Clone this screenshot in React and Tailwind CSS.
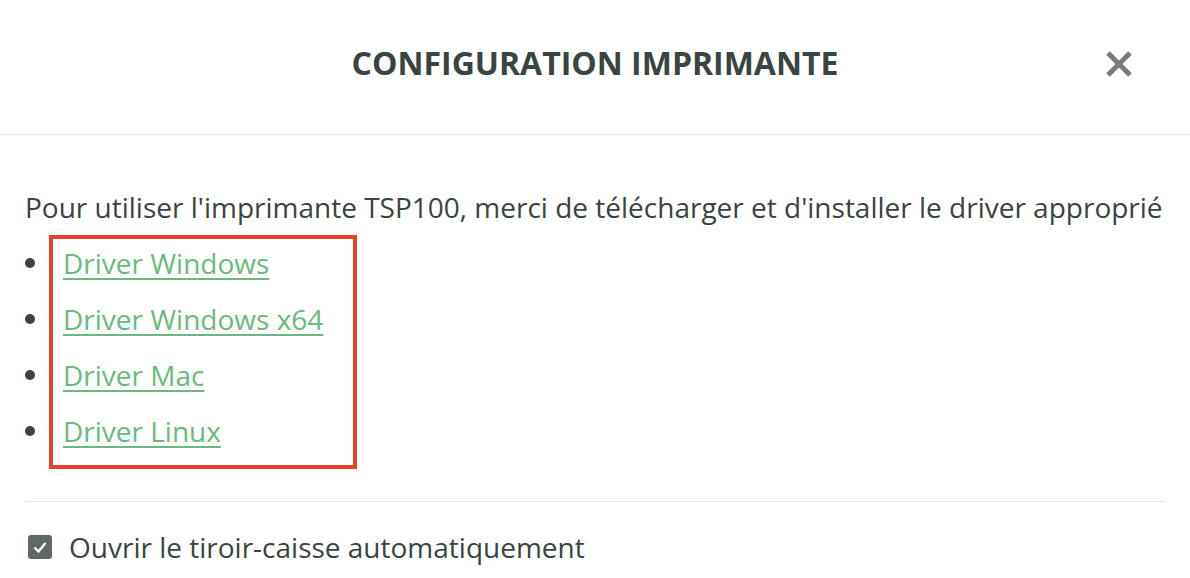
import React, { useState } from 'react';

const drivers = ['Driver Windows', 'Driver Windows x64', 'Driver Mac', 'Driver Linux'];

const App = () => {
  const [openDrawer, setOpenDrawer] = useState(true);

  return (
    <div className="w-[1190px] h-[578px] bg-white overflow-hidden text-[#3a4440]" style={{ fontFamily: '"Open Sans", sans-serif' }}>
      {/* Header */}
      <div className="relative h-[135px] border-b border-[#e3e3e3] flex items-center justify-center">
        <h1 className="text-[32px] leading-[40px] font-bold text-[#3a4440] mt-[-8px]">CONFIGURATION IMPRIMANTE</h1>
        <button className="absolute left-[1105px] top-[50px] text-[#7b7b7b]" title="Fermer">
          <svg width="28" height="28" viewBox="0 0 28 28">
            <path d="M3 3 L25 25 M25 3 L3 25" stroke="currentColor" strokeWidth="5" strokeLinecap="butt" />
          </svg>
        </button>
      </div>

      {/* Body */}
      <div className="px-[25px] pt-[53px]">
        <p className="text-[28px] leading-[38px] whitespace-nowrap">
          Pour utiliser l'imprimante TSP100, merci de télécharger et d'installer le driver approprié
        </p>
        <div className="flex items-start mt-[9px]">
          <div className="flex flex-col gap-[6px] pt-[3px] w-[24px]">
            {drivers.map((d) => (
              <div key={d} className="h-[50px] flex items-center">
                <span className="w-[10px] h-[10px] rounded-full bg-[#3a4440]" />
              </div>
            ))}
          </div>
          <div className="border-[4px] border-[#e8412c] w-[308px] flex flex-col gap-[6px] pt-0 pb-[8px] pl-[10px]">
            {drivers.map((d) => (
              <div key={d} className="h-[50px] flex items-center -mt-[1px] mb-[1px]">
                <a href="#" className="text-[28px] leading-[38px] text-[#6aba7d] underline underline-offset-[4px] decoration-[2px]">{d}</a>
              </div>
            ))}
          </div>
        </div>

        <div className="border-t border-[#e3e3e3] mt-[32px]" />

        <label className="flex items-center mt-[26px] cursor-pointer">
          <span
            onClick={() => setOpenDrawer(!openDrawer)}
            className="w-[24px] h-[24px] rounded-[3px] bg-[#5f6a66] flex items-center justify-center ml-[3px]"
          >
            {openDrawer && (
              <svg width="18" height="18" viewBox="0 0 18 18">
                <path d="M3.5 9.5 L7.5 13.5 L14.5 5" stroke="white" strokeWidth="2.4" fill="none" />
              </svg>
            )}
          </span>
          <span className="text-[28px] leading-[38px] ml-[17px]">Ouvrir le tiroir-caisse automatiquement</span>
        </label>
      </div>
    </div>
  );
};

export default App;
